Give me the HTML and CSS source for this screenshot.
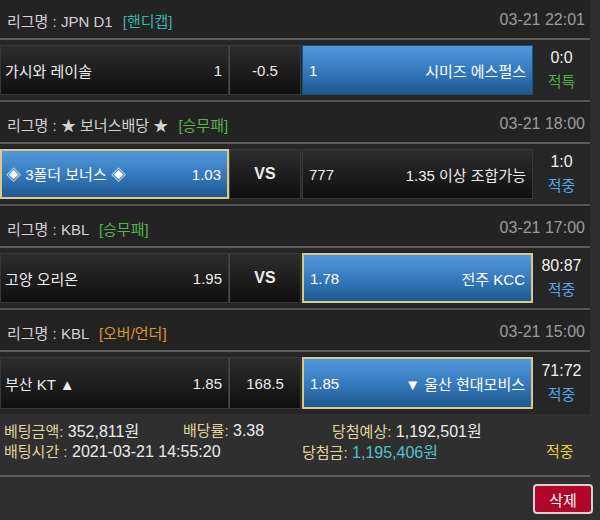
FILE: index.html
```html
<!DOCTYPE html>
<html lang="ko">
<head>
    <meta charset="UTF-8">
    <meta name="viewport" content="width=device-width, initial-scale=1.0">
    <title>베팅내역</title>
    <link rel="stylesheet" href="styles.css">
</head>
<body>
<div class="slip">
    <div class="league first">
        <span class="name">리그명 : JPN D1 <em class="tag handi">[핸디캡]</em></span>
        <span class="time">03-21 22:01</span>
    </div>
    <div class="match">
        <div class="cell home"><span>가시와 레이솔</span><span>1</span></div>
        <div class="cell mid">-0.5</div>
        <div class="cell away pick"><span>1</span><span>시미즈 에스펄스</span></div>
        <div class="result"><b>0:0</b><span class="void">적특</span></div>
    </div>

    <div class="league">
        <span class="name">리그명 : ★ 보너스배당 ★ <em class="tag win">[승무패]</em></span>
        <span class="time">03-21 18:00</span>
    </div>
    <div class="match">
        <div class="cell home pick gold"><span>◈ 3폴더 보너스 ◈</span><span>1.03</span></div>
        <div class="cell mid vs">VS</div>
        <div class="cell away"><span>777</span><span>1.35 이상 조합가능</span></div>
        <div class="result"><b>1:0</b><span class="hit">적중</span></div>
    </div>

    <div class="league">
        <span class="name">리그명 : KBL <em class="tag win">[승무패]</em></span>
        <span class="time">03-21 17:00</span>
    </div>
    <div class="match">
        <div class="cell home"><span>고양 오리온</span><span>1.95</span></div>
        <div class="cell mid vs">VS</div>
        <div class="cell away pick gold"><span>1.78</span><span>전주 KCC</span></div>
        <div class="result"><b>80:87</b><span class="hit">적중</span></div>
    </div>

    <div class="league">
        <span class="name">리그명 : KBL <em class="tag ou">[오버/언더]</em></span>
        <span class="time">03-21 15:00</span>
    </div>
    <div class="match last">
        <div class="cell home"><span>부산 KT ▲</span><span>1.85</span></div>
        <div class="cell mid">168.5</div>
        <div class="cell away pick gold"><span>1.85</span><span>▼ 울산 현대모비스</span></div>
        <div class="result"><b>71:72</b><span class="hit">적중</span></div>
    </div>

    <div class="summary">
        <div class="line">
            <span class="c1"><i>베팅금액:</i> 352,811원</span>
            <span class="c2"><i>배당률:</i> 3.38</span>
            <span class="c3"><i>당첨예상:</i> 1,192,501원</span>
        </div>
        <div class="line">
            <span class="c1w"><i>배팅시간 :</i> 2021-03-21 14:55:20</span>
            <span class="c2w"><i>당첨금:</i> <em>1,195,406원</em></span>
            <span class="state">적중</span>
        </div>
    </div>
    <div class="actions">
        <button type="button" class="del">삭제</button>
    </div>
</div>
</body>
</html>
```

FILE: styles.css
```css
body { margin: 0; background: #2f2f2f; font-family: "Liberation Sans", "Noto Sans CJK KR", sans-serif; font-size: 15px; color: #e8e8e8; }
.slip { width: 590px; }

.league { box-sizing: border-box; height: 42px; display: flex; align-items: center; justify-content: space-between; padding: 4px 5px 0 7px; background: #232323; border-bottom: 2px solid #5e5e5e; color: #d2d2d2; }
.league.first { height: 40px; padding-top: 2px; }
.tag { font-style: normal; margin-left: 6px; }
.tag.handi { color: #3bb4ad; }
.tag.win { color: #58b24e; }
.tag.ou { color: #de9633; }
.time { color: #9c9c9c; font-size: 16px; }

.match { display: flex; height: 50px; padding: 5px 0; background: #262626; border-bottom: 2px solid #555; }
.match.last { border-bottom: none; height: 52px; }
.cell { box-sizing: border-box; display: flex; align-items: center; justify-content: space-between; padding: 0 6px; background: linear-gradient(#2d2d2d, #0f0f0f); border: 1px solid #383838; color: #ececec; }
.home { width: 229px; padding-left: 4px; }
.mid { width: 72px; justify-content: center; border-left-color: #4a4a4a; }
.mid.vs { font-weight: bold; font-size: 16px; }
.away { width: 231px; margin-left: 1px; }
.pick { background: linear-gradient(#5098dc, #3478ba 55%, #1d5890); border-color: #1f4f7e; color: #fff; }
.pick.gold { border: 2px solid #dcc888; }

.result { flex: 1; display: flex; flex-direction: column; align-items: center; justify-content: center; gap: 3px; }
.result b { font-weight: normal; font-size: 16px; color: #f0f0f0; }
.void { color: #4caf3f; }
.hit { color: #56a7e6; }

.summary { padding: 5px 0 14px 4px; border-bottom: 2px solid #5e5e5e; }
.line { display: flex; height: 21px; align-items: center; color: #ececec; font-size: 16px; }
.line i { font-style: normal; color: #e0d69c; font-size: 15px; }
.line em { font-style: normal; color: #4fc3c6; }
.c1 { width: 179px; }
.c2 { width: 149px; }
.c1w { width: 298px; }
.c2w { width: 244px; }
.state { color: #e6d33e; font-size: 15px; }

.actions { display: flex; justify-content: flex-end; padding: 7px 0 0; margin-right: -3px; }
.del { width: 60px; height: 30px; background: #b2062a; color: #fff; border: 2px solid #d4d4d4; border-radius: 4px; font-family: "Liberation Sans", "Noto Sans CJK KR", sans-serif; font-size: 15px; cursor: pointer; }
```
